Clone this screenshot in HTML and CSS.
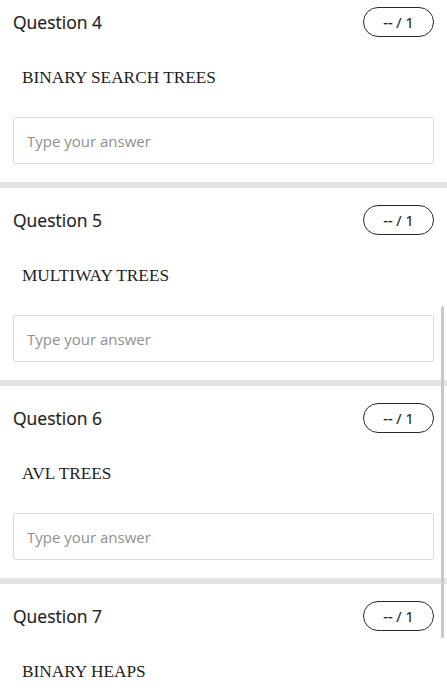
FILE: index.html
```html
<!DOCTYPE html>
<html lang="en">
<head>
    <meta charset="UTF-8">
    <meta name="viewport" content="width=device-width, initial-scale=1.0">
    <title>Quiz</title>
    <link rel="stylesheet" href="styles.css">
</head>
<body>
    <div class="quiz">
        <div class="question">
            <div class="question-head">
                <span class="question-label">Question 4</span>
                <span class="points">-- / 1</span>
            </div>
            <p class="question-title">BINARY SEARCH TREES</p>
            <input class="answer" type="text" placeholder="Type your answer">
        </div>
        <div class="question">
            <div class="question-head">
                <span class="question-label">Question 5</span>
                <span class="points">-- / 1</span>
            </div>
            <p class="question-title">MULTIWAY TREES</p>
            <input class="answer" type="text" placeholder="Type your answer">
        </div>
        <div class="question">
            <div class="question-head">
                <span class="question-label">Question 6</span>
                <span class="points">-- / 1</span>
            </div>
            <p class="question-title">AVL TREES</p>
            <input class="answer" type="text" placeholder="Type your answer">
        </div>
        <div class="question">
            <div class="question-head">
                <span class="question-label">Question 7</span>
                <span class="points">-- / 1</span>
            </div>
            <p class="question-title">BINARY HEAPS</p>
            <input class="answer" type="text" placeholder="Type your answer">
        </div>
    </div>
    <div class="scroll-thumb"></div>
</body>
</html>
```

FILE: styles.css
```css
body {
    margin: 0;
    background: #fff;
    font-family: "Open Sans", Arial, sans-serif;
    color: #1e1e1e;
    overflow: hidden;
}
.quiz {
    margin-top: -10px;
}
.question {
    padding: 17px 13px 18px;
    border-bottom: 6px solid #e4e4e4;
}
.question-head {
    display: flex;
    justify-content: space-between;
    align-items: center;
    height: 30px;
}
.question-label {
    font-size: 17.5px;
    -webkit-text-stroke: 0.2px #1e1e1e;
}
.points {
    box-sizing: border-box;
    width: 71px;
    height: 30px;
    border: 1px solid #2a2a2a;
    border-radius: 15px;
    font-size: 14.5px;
    -webkit-text-stroke: 0.2px #1e1e1e;
    display: flex;
    align-items: center;
    justify-content: center;
}
.question-title {
    font-family: "Liberation Serif", "Times New Roman", serif;
    font-size: 17.3px;
    line-height: 20px;
    margin: 31px 0 29px 9px;
}
.answer {
    display: block;
    box-sizing: border-box;
    width: 100%;
    height: 47px;
    border: 1px solid #dcdcdc;
    border-radius: 2px;
    padding: 0 13px;
    font-family: "Open Sans", Arial, sans-serif;
    font-size: 15px;
    color: #222;
}
.answer::placeholder {
    color: #909090;
}
.scroll-thumb {
    position: absolute;
    left: 441px;
    top: 306px;
    width: 3px;
    height: 332px;
    background: #c8c8c8;
    border-radius: 2px;
}
```
